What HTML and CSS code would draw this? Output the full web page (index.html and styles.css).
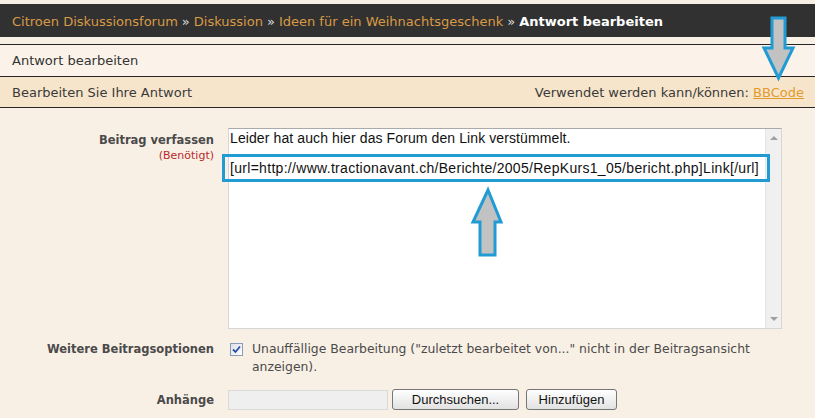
FILE: index.html
```html
<!DOCTYPE html>
<html lang="de">
<head>
<meta charset="utf-8">
<title>Antwort bearbeiten</title>
<link rel="stylesheet" href="styles.css">
</head>
<body>
<div class="page">
  <nav class="crumbs">
    <a href="#">Citroen Diskussionsforum</a><span class="sep">»</span><a href="#">Diskussion</a><span class="sep">»</span><a href="#">Ideen für ein Weihnachtsgeschenk</a><span class="sep">»</span><strong class="current">Antwort bearbeiten</strong>
  </nav>
  <div class="title-row">Antwort bearbeiten</div>
  <div class="sub-row">
    <span>Bearbeiten Sie Ihre Antwort</span>
    <span>Verwendet werden kann/können: <a href="#" class="bb">BBCode</a></span>
  </div>

  <form class="form">
    <div class="row row-message">
      <div class="label">
        <strong>Beitrag verfassen</strong>
        <span class="req">(Benötigt)</span>
      </div>
      <div class="control">
        <div class="editor">
          <div class="editor-text">
            <div>Leider hat auch hier das Forum den Link verstümmelt.</div>
            <div>&nbsp;</div>
            <div class="url">[url=http://www.tractionavant.ch/Berichte/2005/RepKurs1_05/bericht.php]Link[/url]</div>
          </div>
          <div class="scrollbar">
            <span class="sb-up"></span>
            <span class="sb-down"></span>
          </div>
        </div>
      </div>
    </div>

    <div class="row row-options">
      <div class="label"><strong>Weitere Beitragsoptionen</strong></div>
      <div class="control option">
        <span class="checkbox">
          <svg width="9" height="9" viewBox="0 0 9 9"><path d="M1 4.5 L3.5 7 L8 1.5" fill="none" stroke="#2a4ea0" stroke-width="1.8"/></svg>
        </span>
        <span class="option-text">Unauffällige Bearbeitung ("zuletzt bearbeitet von..." nicht in der Beitragsansicht anzeigen).</span>
      </div>
    </div>

    <div class="row row-attach">
      <div class="label"><strong>Anhänge</strong></div>
      <div class="control attach">
        <span class="file-field"></span>
        <button type="button" class="btn btn-browse">Durchsuchen...</button>
        <button type="button" class="btn btn-add">Hinzufügen</button>
      </div>
    </div>
  </form>

  <div class="hl-box"></div>
  <svg class="arrow arrow-down" width="38" height="68" viewBox="0 0 38 68">
    <polygon points="12,3 25,3 25,33 33,33 18.5,63 4,33 12,33" fill="#c2c2c2" stroke="#219bd3" stroke-width="3" stroke-linejoin="miter"/>
  </svg>
  <svg class="arrow arrow-up" width="38" height="72" viewBox="0 0 38 72">
    <polygon points="20,4 33,36 27,36 27,69 12,69 12,36 5,36" fill="#c2c2c2" stroke="#219bd3" stroke-width="3" stroke-linejoin="miter"/>
  </svg>
</div>
</body>
</html>
```

FILE: styles.css
```css
html, body {
  margin: 0;
  padding: 0;
}
body {
  background: #f9f0e5;
  font-family: "DejaVu Sans", Verdana, sans-serif;
  font-size: 13px;
  color: #3a3a3a;
}
.page {
  position: relative;
  width: 815px;
  height: 418px;
  overflow: hidden;
  padding-top: 4px;
  box-sizing: border-box;
}
.crumbs {
  height: 33px;
  box-sizing: border-box;
  padding: 2px 0 0 12px;
  background: #313131;
  display: flex;
  align-items: center;
  margin-bottom: 7px;
  white-space: nowrap;
}
.crumbs a {
  color: #d99a45;
  text-decoration: none;
}
.crumbs .sep {
  color: #dddddd;
  margin: 0 4px;
}
.crumbs .current {
  color: #ffffff;
  font-weight: bold;
}
.title-row {
  border-top: 1px solid #262626;
  height: 31px;
  line-height: 31px;
  padding: 0 12px;
  background: #fbf3e9;
  color: #333;
}
.sub-row {
  border-top: 1px solid #262626;
  border-bottom: 1px solid #262626;
  height: 30px;
  background: #f7e5cb;
  display: flex;
  justify-content: space-between;
  align-items: center;
  padding: 0 11px 0 12px;
  color: #3a3a3a;
}
.sub-row .bb {
  color: #e29a2c;
  text-decoration: underline;
}
.form {
  padding-top: 20px;
}
.row {
  display: flex;
}
.label {
  width: 214px;
  flex: none;
  text-align: right;
  color: #4a4a4a;
  font-size: 11.5px;
  line-height: 18px;
}
.label strong {
  display: block;
  font-weight: bold;
}
.control {
  margin-left: 14px;
}
.row-message .label {
  padding-top: 3px;
}
.req {
  display: block;
  color: #b82a2a;
  font-size: 11px;
  line-height: 14px;
}
.editor {
  width: 554px;
  height: 201px;
  box-sizing: border-box;
  border: 1px solid #d6d6d6;
  border-top-color: #aaaaaa;
  background: #ffffff;
  display: flex;
}
.editor-text {
  flex: 1;
  padding: 2px 2px 0 1px;
  font-family: "Liberation Sans", Arial, sans-serif;
  font-size: 14px;
  line-height: 15px;
  letter-spacing: 0.1px;
  color: #111;
  white-space: nowrap;
  overflow: hidden;
}
.editor-text .url {
  letter-spacing: 0.3px;
}
.scrollbar {
  width: 16px;
  flex: none;
  background: #f0f0f0;
  border-left: 1px solid #e6e6e6;
  display: flex;
  flex-direction: column;
  justify-content: space-between;
  align-items: center;
  padding: 7px 0 7px;
  box-sizing: border-box;
}
.sb-up, .sb-down {
  width: 0;
  height: 0;
  border-left: 4px solid transparent;
  border-right: 4px solid transparent;
}
.sb-up {
  border-bottom: 4px solid #a0a0a0;
}
.sb-down {
  border-top: 4px solid #a0a0a0;
}
.row-options {
  margin-top: 11px;
}
.option {
  display: flex;
  align-items: flex-start;
  width: 554px;
  font-size: 12.4px;
  line-height: 18px;
  color: #4a4a4a;
}
.checkbox {
  width: 13px;
  height: 13px;
  box-sizing: border-box;
  flex: none;
  margin: 3px 9px 0 2px;
  border: 1px solid #8a9cb8;
  background: linear-gradient(135deg, #dcdfe6, #ffffff);
  display: flex;
  align-items: center;
  justify-content: center;
}
.row-attach {
  margin-top: 13px;
  align-items: center;
}
.attach {
  display: flex;
  align-items: center;
}
.file-field {
  width: 160px;
  height: 20px;
  box-sizing: border-box;
  background: #efefef;
  border: 1px solid #dadada;
}
.btn {
  height: 21px;
  box-sizing: border-box;
  border: 1px solid #767676;
  border-radius: 3px;
  background: linear-gradient(#fefefe, #e2e2e2);
  font-family: "Liberation Sans", Arial, sans-serif;
  font-size: 13px;
  color: #111;
  padding: 0;
  margin: 0;
}
.btn-browse {
  width: 127px;
  margin-left: 4px;
}
.btn-add {
  width: 91px;
  margin-left: 7px;
}
.hl-box {
  position: absolute;
  left: 222px;
  top: 154px;
  width: 548px;
  height: 28px;
  box-sizing: border-box;
  border: 3px solid #219bd3;
}
.arrow {
  position: absolute;
  display: block;
}
.arrow-down {
  left: 760px;
  top: 15px;
}
.arrow-up {
  left: 468px;
  top: 186px;
}
```
